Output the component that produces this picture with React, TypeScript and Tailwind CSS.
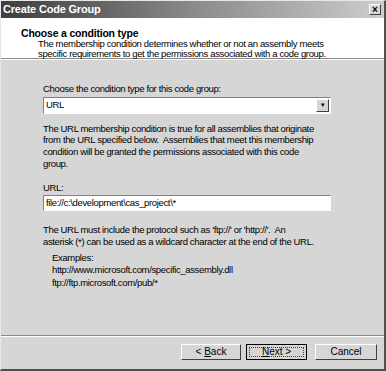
export default function App() {
  const font = { fontFamily: '"Liberation Sans", Arial, sans-serif' };
  return (
    <div
      className="w-[386px] h-[371px] flex flex-col bg-[#d6d6d6] border-l border-t border-l-[#e8e8e8] border-t-[#e8e8e8] border-r-2 border-b-2 border-r-[#505050] border-b-[#505050] text-black text-[9.5px] leading-[11.7px] tracking-[-0.35px] overflow-hidden"
      style={font}
    >
      {/* title bar */}
      <div className="h-[17px] flex items-center justify-between pl-[2px] pr-[3px] bg-gradient-to-r from-[#3e3e3e] via-[#8a8a8a] to-[#cdcdcd]">
        <span className="text-white font-bold text-[11px] tracking-[-0.2px]">Create Code Group</span>
        <div className="w-[12px] h-[11px] bg-[#d6d6d6] border border-t-white border-l-white border-r-[#404040] border-b-[#404040] flex items-center justify-center text-[10px] font-bold leading-none tracking-normal">
          ×
        </div>
      </div>

      {/* header */}
      <div className="h-[41px] bg-white border-b border-b-[#8a8a8a] pl-[20px] pt-[9px]">
        <div className="font-bold text-[10.5px] leading-[12px] tracking-[-0.2px]">Choose a condition type</div>
        <div className="pl-[17px] leading-[9.5px]">
          <div>The membership condition determines whether or not an assembly meets</div>
          <div>specific requirements to get the permissions associated with a code group.</div>
        </div>
      </div>
      <div className="h-px bg-white" />

      {/* body */}
      <div className="flex-1 pl-[42px] pr-[53px] pt-[23px]">
        <div>Choose the condition type for this code group:</div>
        <div className="mt-[2px] h-[17px] bg-white border border-t-[#808080] border-l-[#808080] border-r-white border-b-white flex items-center justify-between">
          <span className="pl-[2px]">URL</span>
          <div className="w-[13px] h-[13px] mr-px bg-[#d6d6d6] border border-t-white border-l-white border-r-[#404040] border-b-[#404040] flex items-center justify-center text-[6px] leading-none">
            ▼
          </div>
        </div>

        <div className="mt-[9px]">
          The URL membership condition is true for all assemblies that originate
          <br />
          from the URL specified below.&nbsp; Assemblies that meet this membership
          <br />
          condition will be granted the permissions associated with this code
          <br />
          group.
        </div>

        <div className="mt-[12px]">URL:</div>
        <div className="mt-[2px] h-[16px] bg-white border border-t-[#808080] border-l-[#808080] border-r-white border-b-white flex items-center pl-[2px]">
          file://c:\development\cas_project\*
        </div>

        <div className="mt-[13px]">
          The URL must include the protocol such as 'ftp://' or 'http://'.&nbsp; An
          <br />
          asterisk (*) can be used as a wildcard character at the end of the URL.
        </div>
        <div className="pl-[9px] mt-[4px]">
          <div>Examples:</div>
          <div className="mt-[1px]">http://www.microsoft.com/specific_assembly.dll</div>
          <div className="mt-[1px]">ftp://ftp.microsoft.com/pub/*</div>
        </div>
      </div>

      {/* footer */}
      <div className="border-t border-t-[#8a8a8a]" />
      <div className="border-t border-t-white h-[33px] flex items-start justify-end pr-[7px] pt-[7px] gap-[5px] tracking-normal">
        <button className="w-[60px] h-[16px] bg-[#d6d6d6] border border-t-white border-l-white border-r-[#404040] border-b-[#404040] text-[10px] leading-none">
          &lt; <span className="underline">B</span>ack
        </button>
        <button className="w-[61px] h-[16px] bg-[#d6d6d6] border border-black p-[2px] text-[10px] leading-none mr-[3px]">
          <div className="w-full h-full border border-dotted border-[#404040] flex items-center justify-center">
            <span><span className="underline">N</span>ext &gt;</span>
          </div>
        </button>
        <button className="w-[62px] h-[16px] bg-[#d6d6d6] border border-t-white border-l-white border-r-[#404040] border-b-[#404040] text-[10px] leading-none">
          Cancel
        </button>
      </div>
    </div>
  );
}
